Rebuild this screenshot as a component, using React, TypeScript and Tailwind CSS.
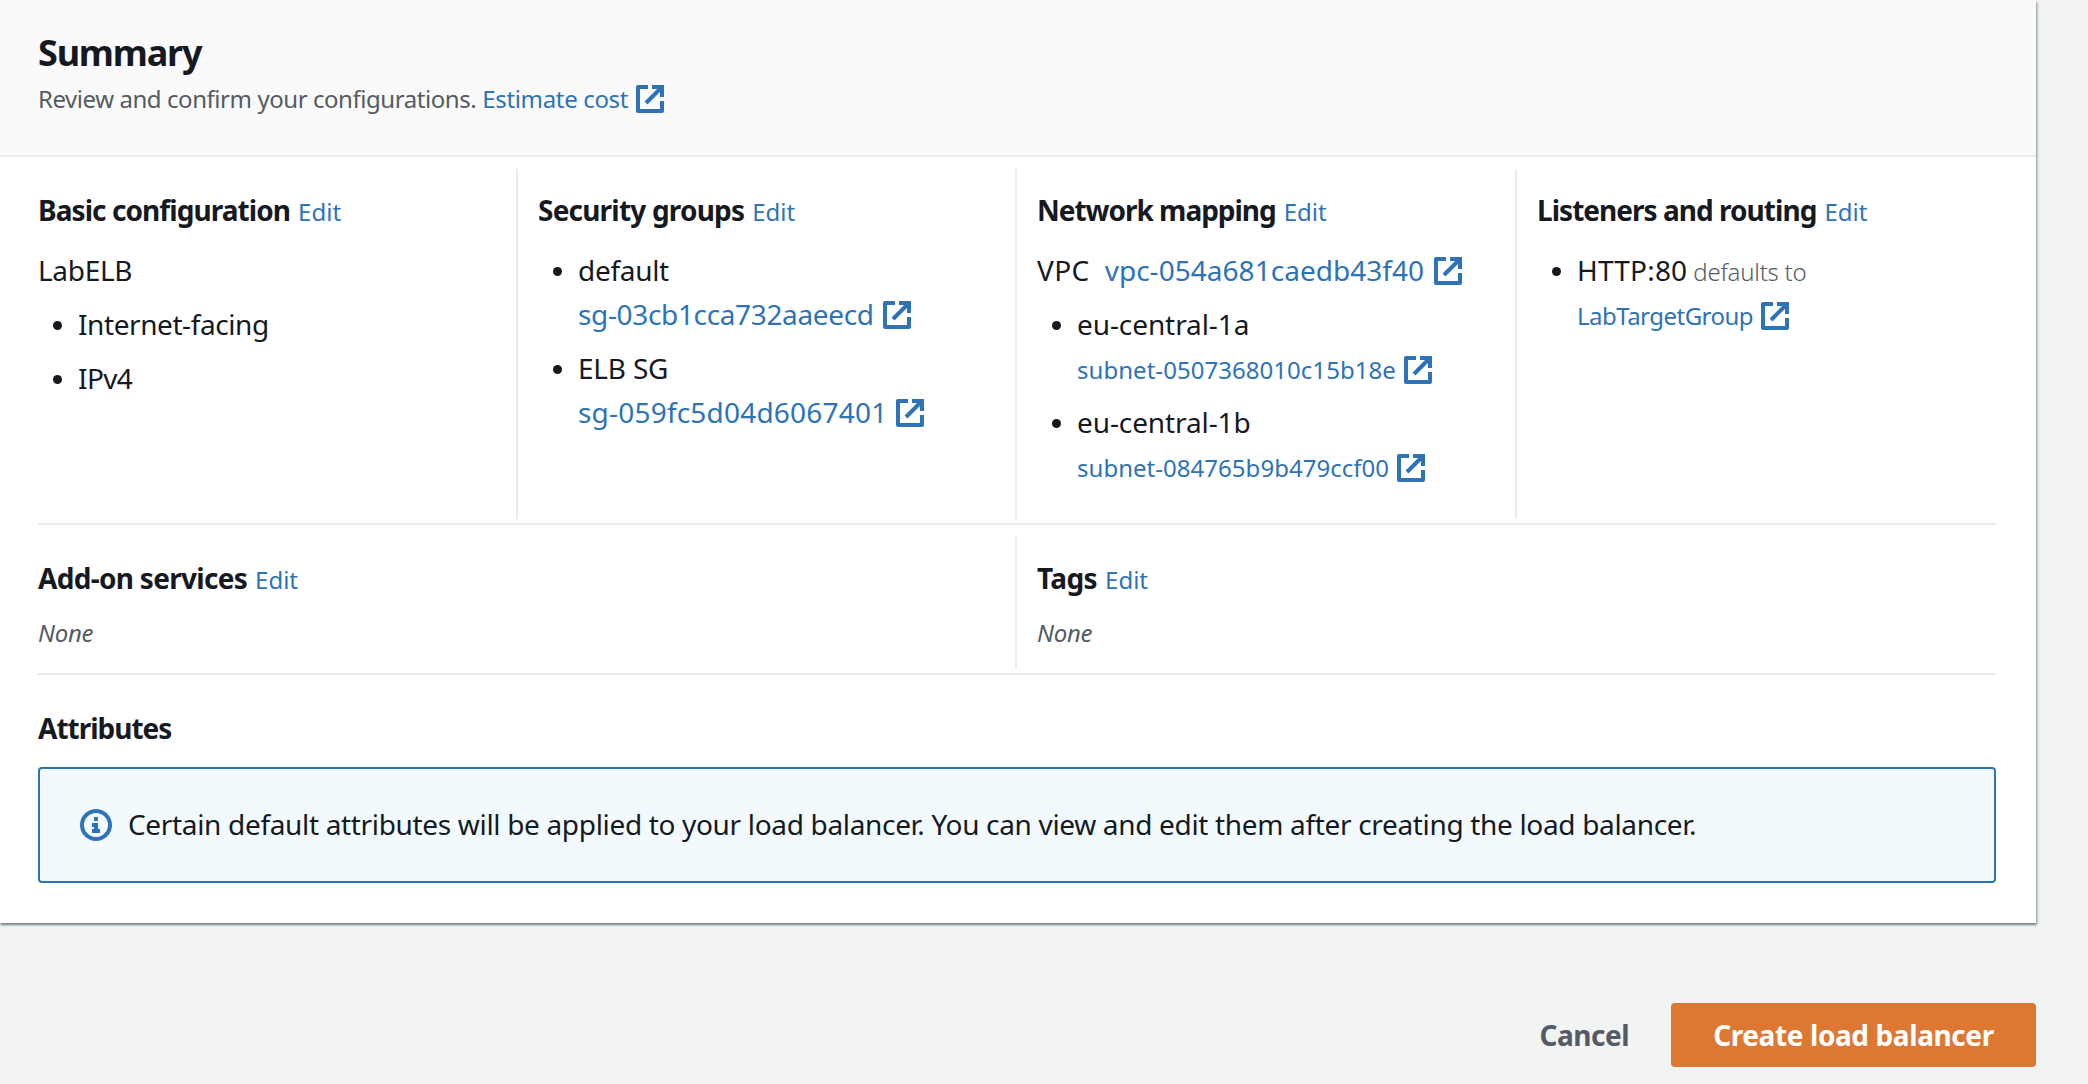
import type { ReactNode } from "react";

function ExternalIcon({ className }: { className: string }) {
  return (
    <svg viewBox="0 0 28 28" fill="none" stroke="currentColor" strokeWidth="4" className={`inline-block size-7 ${className}`}>
      <path d="M12 2H2V26H26V16" strokeLinejoin="round" />
      <path d="M16 2H26V12" />
      <path d="M10 18L26 2" />
    </svg>
  );
}

function InfoIcon() {
  return (
    <svg viewBox="0 0 32 32" className="size-8 shrink-0 text-[#2e73b8]">
      <circle cx="16" cy="16" r="14" fill="none" stroke="currentColor" strokeWidth="4" />
      <path d="M14 8h4v4h-4zM12 14h6v6h2v4h-8v-4h2v-2h-2z" fill="currentColor" />
    </svg>
  );
}

function Link({ className = "", icon, children }: { className?: string; icon?: string; children: ReactNode }) {
  return (
    <a className="whitespace-nowrap text-[#2e73b8]">
      <span className={className}>{children}</span>
      {icon && <ExternalIcon className={icon} />}
    </a>
  );
}

function Heading({ title, tracking, editable = true }: { title: string; tracking: string; editable?: boolean }) {
  return (
    <div className="flex h-9 items-baseline gap-2 leading-9">
      <h2 className={`font-bold ${tracking}`}>{title}</h2>
      {editable && <a className="text-2xl leading-9 text-[#2e73b8]">Edit</a>}
    </div>
  );
}

function Cell({ className = "", children }: { className?: string; children: ReactNode }) {
  return <section className={`pt-[23px] ${className}`}>{children}</section>;
}

function Item({ children }: { children: ReactNode }) {
  return (
    <li className="flex pl-[15px]">
      <span className="mt-[19px] mr-4 size-[9px] shrink-0 rounded-full bg-[#16191f]" />
      <div>{children}</div>
    </li>
  );
}

export default function App() {
  return (
    <div className="h-[1084px] overflow-hidden bg-[#f2f3f3] font-['Noto_Sans',sans-serif] text-[28px] leading-[44px] text-[#16191f]">
      <main className="h-[923px] w-[2036px] bg-white shadow-[0_2px_2px_0_rgba(0,28,36,0.4),2px_2px_2px_0_rgba(0,28,36,0.2)]">
        <header className="h-[157px] border-b-2 border-[#ebebeb] bg-[#fafafa] pt-[31px] pl-[38px]">
          <h1 className="text-4xl leading-[44px] font-bold tracking-[-1.2px]">Summary</h1>
          <p className="mt-[6px] text-2xl leading-9 text-[#545b64]">
            <span className="mr-[6px] tracking-[-0.44px]">Review and confirm your configurations.</span>
            <Link className="tracking-[-0.34px]" icon="ml-[8px] align-[-5px]">Estimate cost</Link>
          </p>
        </header>

        <div className="pr-10 pl-[38px]">
          <div className="grid h-[368px] grid-cols-[478px_499px_500px_481px] border-b-2 border-[#ebebeb] pt-3 pb-1">
            <Cell>
              <Heading title="Basic configuration" tracking="tracking-[-0.93px]" />
              <p className="mt-5 tracking-[-0.3px]">LabELB</p>
              <ul className="mt-[10px] flex flex-col gap-[10px]">
                <Item><span className="tracking-[-0.42px]">Internet-facing</span></Item>
                <Item><span className="tracking-[-0.6px]">IPv4</span></Item>
              </ul>
            </Cell>
            <Cell className="border-l-2 border-[#ebebeb] pl-5">
              <Heading title="Security groups" tracking="tracking-[-0.8px]" />
              <ul className="mt-5 flex flex-col gap-[10px]">
                <Item>
                  <p className="tracking-[-0.3px]">default</p>
                  <Link className="tracking-[-0.35px]" icon="ml-[9px] align-[-4px]">sg-03cb1cca732aaeecd</Link>
                </Item>
                <Item>
                  <p className="tracking-[-0.2px]">ELB SG</p>
                  <Link className="tracking-[0.2px]" icon="ml-[9px] align-[-4px]">sg-059fc5d04d6067401</Link>
                </Item>
              </ul>
            </Cell>
            <Cell className="border-l-2 border-[#ebebeb] pl-5">
              <Heading title="Network mapping" tracking="tracking-[-1.02px]" />
              <p className="mt-5">
                <span className="mr-[15px] tracking-[0.4px]">VPC</span>
                <Link className="tracking-[0.03px]" icon="ml-[10px] align-[-4px]">vpc-054a681caedb43f40</Link>
              </p>
              <ul className="mt-[10px] flex flex-col gap-[10px]">
                <Item>
                  <p className="tracking-[-0.09px]">eu-central-1a</p>
                  <Link className="text-2xl tracking-[0.04px]" icon="ml-[8px] align-[-5px]">subnet-0507368010c15b18e</Link>
                </Item>
                <Item>
                  <p className="tracking-[-0.1px]">eu-central-1b</p>
                  <Link className="text-2xl tracking-[0.03px]" icon="ml-[8px] align-[-5px]">subnet-084765b9b479ccf00</Link>
                </Item>
              </ul>
            </Cell>
            <Cell className="border-l-2 border-[#ebebeb] pl-5">
              <Heading title="Listeners and routing" tracking="tracking-[-0.97px]" />
              <ul className="mt-5">
                <Item>
                  <p>
                    <span className="mr-[6px] tracking-[0.2px]">HTTP:80</span>
                    <span className="text-2xl font-light tracking-[-0.25px] text-[#545b64]">defaults to</span>
                  </p>
                  <Link className="text-2xl tracking-[-0.52px]" icon="ml-[8px] align-[-5px]">LabTargetGroup</Link>
                </Item>
              </ul>
            </Cell>
          </div>

          <div className="grid h-[150px] grid-cols-[977px_981px] border-b-2 border-[#ebebeb] pt-3 pb-1">
            <Cell>
              <Heading title="Add-on services" tracking="tracking-[-0.7px]" />
              <p className="mt-[15px] text-2xl leading-[44px] tracking-[-0.3px] text-[#545b64] italic">None</p>
            </Cell>
            <Cell className="border-l-2 border-[#ebebeb] pl-5">
              <Heading title="Tags" tracking="tracking-[-0.6px]" />
              <p className="mt-[15px] text-2xl leading-[44px] tracking-[-0.3px] text-[#545b64] italic">None</p>
            </Cell>
          </div>

          <section className="pt-[35px]">
            <Heading title="Attributes" tracking="tracking-[-1px]" editable={false} />
            <div className="mt-[21px] flex h-[116px] items-center gap-4 rounded-[4px] border-2 border-[#2e73b8] bg-[#f2fafd] pl-10">
              <InfoIcon />
              <p className="pb-[2px] whitespace-nowrap tracking-[-0.33px]">
                Certain default attributes will be applied to your load balancer. You can view and edit them after creating the load balancer.
              </p>
            </div>
          </section>
        </div>
      </main>

      <footer className="mt-20 flex w-[2036px] items-center justify-end gap-[42px] font-bold">
        <button className="tracking-[-0.5px] text-[#545b64]">Cancel</button>
        <button className="h-16 w-[365px] rounded-[4px] bg-[#dd7832] tracking-[-0.4px] text-white">Create load balancer</button>
      </footer>
    </div>
  );
}
